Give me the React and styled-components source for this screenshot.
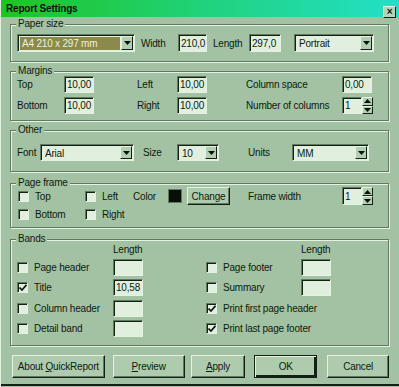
import React from 'react'
import styled, { createGlobalStyle } from 'styled-components'

const BG = '#a3c2a3'
const FIELD = '#e1efdf'
const DARK = '#142014'
const SHADE = '#607a60'
const LIGHT = '#e4f2e2'

const GlobalStyle = createGlobalStyle`
  html, body {
    margin: 0;
    background: ${BG};
  }
  body {
    font-family: "Liberation Sans", Arial, sans-serif;
    font-size: 10px;
    letter-spacing: -0.2px;
    color: #0d1b0d;
  }
`

const Window = styled.div`
  width: 399px;
  height: 387px;
  box-sizing: border-box;
  background: ${BG};
  border-left: 1px solid ${LIGHT};
  display: flex;
  flex-direction: column;
`

const TitleBar = styled.div`
  height: 17px;
  flex-shrink: 0;
  display: flex;
  align-items: center;
  justify-content: space-between;
  padding: 0 3px 0 5px;
  background: linear-gradient(90deg, #1fc41f 0%, #20d27a 50%, #22e0c8 100%);
`

const Title = styled.span`
  font-weight: bold;
  font-size: 10px;
  color: #061006;
`

const CloseButton = styled.span`
  width: 13px;
  height: 12px;
  margin-top: 6px;
  box-sizing: border-box;
  display: flex;
  align-items: center;
  justify-content: center;
  background: #b8d4b8;
  border: 1px solid;
  border-color: ${LIGHT} ${DARK} ${DARK} ${LIGHT};
  font-weight: bold;
  font-size: 10px;
  line-height: 1;
`

const Body = styled.div`
  flex: 1;
  display: flex;
  flex-direction: column;
  padding: 7px 10px 0 9px;
  border-bottom: 2px solid ${DARK};
  margin-bottom: 1px;
`

const Group = styled.div`
  position: relative;
  box-sizing: border-box;
  height: ${p => p.$h}px;
  margin-top: ${p => p.$mt || 0}px;
  padding: ${p => p.$pad};
  border: 1px solid ${SHADE};
  box-shadow: inset 1px 1px 0 ${LIGHT}, 1px 1px 0 ${LIGHT};
`

const Legend = styled.span`
  position: absolute;
  top: -7px;
  left: 5px;
  padding: 0 2px;
  background: ${BG};
  line-height: 12px;
`

const Row = styled.div`
  display: flex;
  align-items: center;
`

const Grid = styled.div`
  display: grid;
  grid-template-columns: ${p => p.$cols};
  grid-template-rows: ${p => p.$first || 'none'};
  grid-auto-rows: ${p => p.$rows || '17px'};
  row-gap: ${p => p.$gap || 0}px;
  align-items: center;
`

const Label = styled.span`
  width: ${p => (p.$w ? `${p.$w}px` : 'auto')};
  margin-left: ${p => p.$ml || 0}px;
  flex-shrink: 0;
  white-space: nowrap;
`

const Field = styled.span`
  box-sizing: border-box;
  width: ${p => p.$w}px;
  height: ${p => p.$h || 17}px;
  display: flex;
  align-items: center;
  padding-left: 2px;
  background: ${FIELD};
  border: 1px solid;
  border-color: ${SHADE} ${LIGHT} ${LIGHT} ${SHADE};
  box-shadow: inset 1px 1px 0 ${DARK};
  white-space: nowrap;
  overflow: hidden;
`

const ComboBox = styled.span`
  box-sizing: border-box;
  width: ${p => p.$w}px;
  height: ${p => p.$h || 17}px;
  margin-left: ${p => p.$ml || 0}px;
  display: flex;
  align-items: stretch;
  background: ${FIELD};
  border: 1px solid;
  border-color: ${SHADE} ${LIGHT} ${LIGHT} ${SHADE};
  box-shadow: inset 1px 1px 0 ${DARK};
`

const ComboText = styled.span`
  flex: 1;
  display: flex;
  align-items: center;
  margin: 2px 1px 1px 2px;
  padding-left: 2px;
  white-space: nowrap;
  overflow: hidden;
  background: ${p => (p.$selected ? '#8b8a4c' : 'transparent')};
  color: ${p => (p.$selected ? '#eef0dc' : 'inherit')};
`

const ArrowButton = styled.span`
  width: 12px;
  margin: 1px 1px 1px 0;
  box-sizing: border-box;
  display: flex;
  align-items: center;
  justify-content: center;
  background: #b3cfb3;
  border: 1px solid;
  border-color: ${LIGHT} ${DARK} ${DARK} ${LIGHT};
`

const Spinner = styled.span`
  display: flex;
  align-items: stretch;
  height: ${p => p.$h || 17}px;
`

const SpinArrows = styled.span`
  width: 11px;
  display: flex;
  flex-direction: column;
`

const SpinHalf = styled.span`
  flex: 1;
  box-sizing: border-box;
  display: flex;
  align-items: center;
  justify-content: center;
  background: #b3cfb3;
  border: 1px solid;
  border-color: ${LIGHT} ${DARK} ${DARK} ${LIGHT};
`

const CheckRow = styled.span`
  display: flex;
  align-items: center;
  gap: 6px;
  white-space: nowrap;
`

const Box = styled.span`
  width: 11px;
  height: 11px;
  box-sizing: border-box;
  flex-shrink: 0;
  display: flex;
  align-items: center;
  justify-content: center;
  background: ${FIELD};
  border: 1px solid;
  border-color: ${SHADE} ${LIGHT} ${LIGHT} ${SHADE};
  box-shadow: inset 1px 1px 0 ${DARK};
`

const Swatch = styled.span`
  width: 14px;
  height: 14px;
  background: #061006;
  border: 1px solid ${SHADE};
  box-sizing: border-box;
`

const Button = styled.span`
  box-sizing: border-box;
  width: ${p => p.$w}px;
  height: ${p => p.$h || 23}px;
  margin-left: ${p => p.$ml || 0}px;
  display: flex;
  align-items: center;
  justify-content: center;
  white-space: nowrap;
  background: #aecbae;
  border: 1px solid;
  border-color: ${p => (p.$default ? DARK : `${LIGHT} ${DARK} ${DARK} ${LIGHT}`)};
  box-shadow: ${p =>
    p.$default
      ? `inset 1px 1px 0 ${LIGHT}, inset -2px -2px 0 ${DARK}`
      : `inset -1px -1px 0 ${SHADE}`};
  u {
    text-decoration: underline;
  }
`

const ButtonRow = styled.div`
  display: flex;
  margin-top: 9px;
  padding-left: 2px;
`

function Arrow({ up }) {
  return (
    <svg width="7" height="4" viewBox="0 0 7 4">
      <path d={up ? 'M0 4 L3.5 0 L7 4 Z' : 'M0 0 L7 0 L3.5 4 Z'} fill="#061006" />
    </svg>
  )
}

function Combo({ w, h, ml, value, selected }) {
  return (
    <ComboBox $w={w} $h={h} $ml={ml}>
      <ComboText $selected={selected}>{value}</ComboText>
      <ArrowButton><Arrow /></ArrowButton>
    </ComboBox>
  )
}

function Spin({ value, h }) {
  return (
    <Spinner $h={h}>
      <Field $w={20} $h={h}>{value}</Field>
      <SpinArrows>
        <SpinHalf><Arrow up /></SpinHalf>
        <SpinHalf><Arrow /></SpinHalf>
      </SpinArrows>
    </Spinner>
  )
}

function Check({ checked, children }) {
  return (
    <CheckRow>
      <Box>
        {checked && (
          <svg width="8" height="7" viewBox="0 0 8 7">
            <path d="M0.5 3.5 L3 6 L7.5 0.8" stroke="#061006" strokeWidth="1.6" fill="none" />
          </svg>
        )}
      </Box>
      <span>{children}</span>
    </CheckRow>
  )
}

export default function App() {
  return (
    <>
      <GlobalStyle />
      <Window>
        <TitleBar>
          <Title>Report Settings</Title>
          <CloseButton>×</CloseButton>
        </TitleBar>
        <Body>
          <Group $h={38} $pad="9px 0 0 6px">
            <Legend>Paper size</Legend>
            <Row>
              <Combo w={118} h={18} value="A4 210 x 297 mm" selected />
              <Label $w={37} $ml={6}>Width</Label>
              <Field $w={29} $h={18}>210,0</Field>
              <Label $w={36} $ml={6}>Length</Label>
              <Field $w={32} $h={18}>297,0</Field>
              <Combo w={80} h={18} ml={13} value="Portrait" />
            </Row>
          </Group>

          <Group $h={50} $mt={9} $pad="4px 0 0 6px">
            <Legend>Margins</Legend>
            <Grid $cols="47px 73px 40px 69px 96px auto" $gap={4}>
              <Label>Top</Label>
              <Field $w={30}>10,00</Field>
              <Label>Left</Label>
              <Field $w={30}>10,00</Field>
              <Label>Column space</Label>
              <Field $w={30}>0,00</Field>
              <Label>Bottom</Label>
              <Field $w={30}>10,00</Field>
              <Label>Right</Label>
              <Field $w={30}>10,00</Field>
              <Label>Number of columns</Label>
              <Spin value="1" />
            </Grid>
          </Group>

          <Group $h={42} $mt={9} $pad="13px 0 0 6px">
            <Legend>Other</Legend>
            <Grid $cols="23px 103px 34px 71px 44px auto">
              <Label>Font</Label>
              <Combo w={94} value="Arial" />
              <Label>Size</Label>
              <Combo w={42} value="10" />
              <Label>Units</Label>
              <Combo w={77} value="MM" />
            </Grid>
          </Group>

          <Group $h={45} $mt={11} $pad="3px 0 0 7px">
            <Legend>Page frame</Legend>
            <Grid $cols="67px 48px 35px 19px 61px 94px auto" $rows="18px">
              <Check>Top</Check>
              <Check>Left</Check>
              <Label>Color</Label>
              <Swatch />
              <Button $w={43} $h={18}>Change</Button>
              <Label>Frame width</Label>
              <Spin value="1" h={18} />
              <Check>Bottom</Check>
              <Check>Right</Check>
            </Grid>
          </Group>

          <Group $h={107} $mt={11} $pad="3px 0 0 6px">
            <Legend>Bands</Legend>
            <Grid $cols="96px 93px 95px auto" $first="12px" $rows="17px" $gap={3.5}>
              <span />
              <Label>Length</Label>
              <span />
              <Label>Length</Label>
              <Check>Page header</Check>
              <Field $w={30} />
              <Check>Page footer</Check>
              <Field $w={30} />
              <Check checked>Title</Check>
              <Field $w={30}>10,58</Field>
              <Check>Summary</Check>
              <Field $w={30} />
              <Check>Column header</Check>
              <Field $w={30} />
              <Check checked>Print first page header</Check>
              <span />
              <Check>Detail band</Check>
              <Field $w={30} />
              <Check checked>Print last page footer</Check>
              <span />
            </Grid>
          </Group>

          <ButtonRow>
            <Button $w={93}><span>About <u>Q</u>uickReport</span></Button>
            <Button $w={72} $ml={8}><span><u>P</u>review</span></Button>
            <Button $w={55} $ml={6}><span><u>A</u>pply</span></Button>
            <Button $w={63} $ml={9} $default>OK</Button>
            <Button $w={62} $ml={10}>Cancel</Button>
          </ButtonRow>
        </Body>
      </Window>
    </>
  )
}
